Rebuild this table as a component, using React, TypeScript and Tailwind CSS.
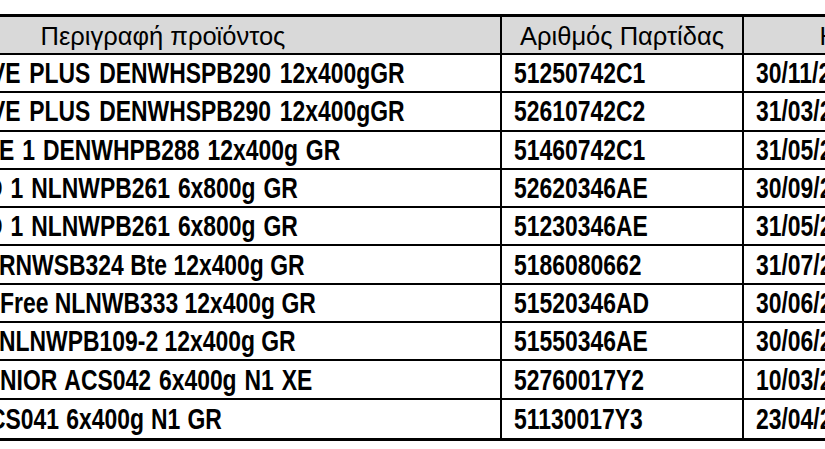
import React from "react";

const rows: { d: string; indent: string; b: string; e: string }[] = [
  { d: "VE PLUS DENWHSPB290 12x400gGR", indent: "-ml-[10px] [word-spacing:3px]", b: "51250742C1", e: "30/11/2025" },
  { d: "VE PLUS DENWHSPB290 12x400gGR", indent: "-ml-[10px] [word-spacing:3px]", b: "52610742C2", e: "31/03/2026" },
  { d: "E 1 DENWHPB288 12x400g GR", indent: "-ml-[1.5px] [word-spacing:2px]", b: "51460742C1", e: "31/05/2025" },
  { d: "D 1 NLNWPB261 6x800g GR", indent: "-ml-[14px] [word-spacing:2px]", b: "52620346AE", e: "30/09/2025" },
  { d: "D 1 NLNWPB261 6x800g GR", indent: "-ml-[14px] [word-spacing:2px]", b: "51230346AE", e: "31/05/2025" },
  { d: "RNWSB324 Bte 12x400g GR", indent: "-ml-[1.5px]", b: "5186080662", e: "31/07/2025" },
  { d: "Free NLNWB333 12x400g GR", indent: "ml-[0px]", b: "51520346AD", e: "30/06/2025" },
  { d: "NLNWPB109-2 12x400g GR", indent: "-ml-[1.5px]", b: "51550346AE", e: "30/06/2025" },
  { d: "NIOR ACS042 6x400g N1 XE", indent: "ml-[0px] [word-spacing:2px]", b: "52760017Y2", e: "10/03/2026" },
  { d: "CS041 6x400g N1 GR", indent: "-ml-[11.5px] [word-spacing:1px]", b: "51130017Y3", e: "23/04/2026" },
];

export default function App() {
  return (
    <div
      className="w-[825px] h-[449px] overflow-hidden bg-white pt-[14px] text-black"
      style={{ fontFamily: '"Liberation Sans", Arial, sans-serif' }}
    >
      <div className="w-[1102px] border-t-[3px] border-b-[3px] border-black">
        <div className="flex h-[38px] bg-[#d9d9d9] border-b-2 border-black text-[25.5px] leading-none">
          <div className="w-[502px] shrink-0 border-r-2 border-black flex items-center justify-center pr-[174px] pt-[3px] whitespace-nowrap">
            Περιγραφή προϊόντος
          </div>
          <div className="w-[242px] shrink-0 border-r-2 border-black flex items-center justify-center pt-[3px] whitespace-nowrap">
            Αριθμός Παρτίδας
          </div>
          <div className="w-[358px] shrink-0 flex items-center justify-center pt-[3px] whitespace-nowrap">
            Ημερομηνία λήξης
          </div>
        </div>
        {rows.map((r, i) => (
          <div
            key={i}
            className={`flex h-[38.3px] font-bold text-[29px] leading-none ${i < rows.length - 1 ? "border-b-2 border-black" : ""}`}
          >
            <div className="w-[502px] shrink-0 border-r-2 border-black flex items-center overflow-hidden whitespace-nowrap pt-[1px]">
              <span className={`inline-block origin-left scale-x-[0.79] ${r.indent}`}>{r.d}</span>
            </div>
            <div className="w-[242px] shrink-0 border-r-2 border-black flex items-center pl-[12px] whitespace-nowrap pt-[1px]">
              <span className="inline-block origin-left scale-x-[0.79]">{r.b}</span>
            </div>
            <div className="w-[358px] shrink-0 flex items-center pl-[12px] whitespace-nowrap pt-[1px]">
              <span className="inline-block origin-left scale-x-[0.79]">{r.e}</span>
            </div>
          </div>
        ))}
      </div>
    </div>
  );
}
